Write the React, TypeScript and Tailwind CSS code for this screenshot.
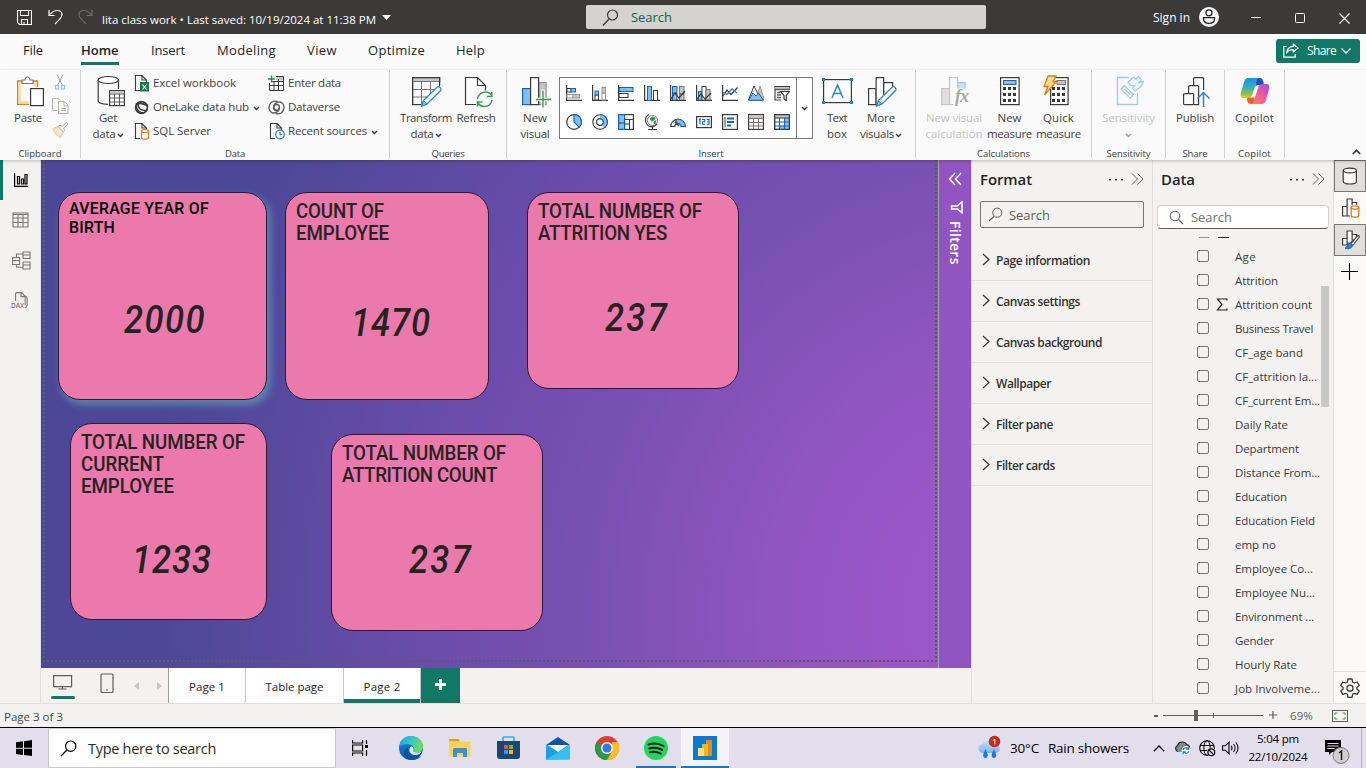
import { useLayoutEffect, useRef } from "react";
import type { ReactNode } from "react";

/* Single line of text whose tracking is tuned so that it fills a given width. */
function T({ w, children, className = "" }: { w: number; children: string; className?: string }) {
  const ref = useRef<HTMLSpanElement>(null);
  useLayoutEffect(() => {
    const el = ref.current;
    if (!el) return;
    el.style.letterSpacing = "0px";
    const natural = parseFloat(getComputedStyle(el).width);
    el.style.letterSpacing = `${(w - natural) / children.length}px`;
  }, [w, children]);
  return (
    <span ref={ref} className={"inline-block whitespace-pre " + className}>
      {children}
    </span>
  );
}

function Svg({ w, h, children, className = "" }: { w: number; h: number; children: ReactNode; className?: string }) {
  return (
    <svg width={w} height={h} viewBox={`0 0 ${w} ${h}`} fill="none" className={"block shrink-0 " + className}>
      {children}
    </svg>
  );
}

const Chevron = ({ c = "#3b3a39" }: { c?: string }) => (
  <Svg w={7} h={5}>
    <path d="M1 1l2.500 2.500L6 1" stroke={c} strokeWidth="1.400" />
  </Svg>
);

/* ---------- title bar ---------- */

function TitleBar() {
  return (
    <div className="flex h-[34px] items-center bg-[#3b3a39] text-white">
      <Svg w={16} h={16} className="ml-4">
        <path d="M1.500 1.500h14v14h-12l-2-2zM4.500 1.500v5h8v-5M5.500 15.500v-5h6v5M8 15.500v-2.500" stroke="#fff" strokeWidth="1.100" />
      </Svg>
      <Svg w={16} h={16} className="ml-4">
        <path d="M1 1v5.500h5.500M1.300 6.200C4 3 6.500 1.500 9.200 1.500c3 0 4.800 2 4.800 4.300 0 2-1 3-2.500 4.500L7 15" stroke="#fff" strokeWidth="1.200" />
      </Svg>
      <Svg w={16} h={16} className="ml-3.5">
        <path d="M14 1v5.500H8.500M13.700 6.200C11 3 8.500 1.500 5.800 1.500 2.800 1.500 1 3.500 1 5.800c0 2 1 3 2.500 4.500L8 15" stroke="#6f6e6d" strokeWidth="1.200" />
      </Svg>
      <T w={274} className="ml-2 mt-[6px] text-[11.500px] font-medium leading-4">{"lita class work • Last saved: 10/19/2024 at 11:38 PM"}</T>
      <Svg w={9} h={5} className="ml-[6px]">
        <path d="M0 0h9L4.500 5z" fill="#fff" />
      </Svg>
      <div className="ml-[195px] flex h-6 w-[400px] items-center rounded-[2px] bg-[#d4d3d1] text-[#185c4c]">
        <Svg w={17} h={17} className="ml-[16px]">
          <path d="M6.800 10.200L1 16.500" stroke="#3b3a39" strokeWidth="1.300" />
          <circle cx="10.500" cy="6" r="5" stroke="#3b3a39" strokeWidth="1.200" />
        </Svg>
        <T w={41} className="ml-[12px] text-[13px] leading-4">Search</T>
      </div>
      <T w={37} className="ml-[167px] mt-[2px] text-[12px] leading-4">Sign in</T>
      <Svg w={20} h={20} className="ml-[9px]">
        <circle cx="10" cy="10" r="10" fill="#fafafa" />
        <circle cx="10" cy="5.800" r="3" stroke="#222" strokeWidth="1.300" />
        <path d="M4.500 10.700h11v1.300c0 2.700-2.500 4.300-5.500 4.300S4.500 14.700 4.500 12z" stroke="#222" strokeWidth="1.300" />
      </Svg>
      <Svg w={10} h={10} className="ml-8">
        <path d="M0 5.500h10" stroke="#fff" />
      </Svg>
      <Svg w={10} h={10} className="ml-[34px] mt-[2px]">
        <rect x=".5" y=".5" width="9" height="9" rx="1" stroke="#fff" />
      </Svg>
      <Svg w={11} h={11} className="ml-[34px] mt-[2px]">
        <path d="M.5.500l10 10M10.500.500l-10 10" stroke="#fff" strokeWidth="1.200" />
      </Svg>
    </div>
  );
}

/* ---------- ribbon ---------- */

function MenuTabs() {
  return (
    <div className="flex h-9 items-center bg-[#fafafa] text-[13px] text-[#252423]">
      <T w={20} className="ml-[23px] mb-[3px]">File</T>
      <div className="ml-[38px] flex h-full w-[38px] flex-col">
        <T w={38} className="mt-[6px] leading-5 font-semibold">Home</T>
        <div className="mt-[2px] h-[3px] bg-[#117865]" />
      </div>
      <T w={34} className="ml-8 mb-[3px]">Insert</T>
      <T w={59} className="ml-8 mb-[3px]">Modeling</T>
      <T w={30} className="ml-[31px] mb-[3px]">View</T>
      <T w={57} className="ml-[31px] mb-[3px]">Optimize</T>
      <T w={29} className="ml-[31px] mb-[3px]">Help</T>
      <div className="ml-auto mr-[6px] mb-[3px] flex h-6 w-[84px] items-center rounded-[3px] bg-[#117865] text-white">
        <Svg w={16} h={15} className="ml-[7px]">
          <path d="M3.500 3.500H.8v10.700h11.400V11" stroke="#fff" strokeWidth="1.200" />
          <path d="M10.200 1l4.800 4-4.800 4V6.700C7 6.700 5 7.500 3.500 10 4 6 6.500 3.600 10.200 3.300z" stroke="#fff" strokeWidth="1.200" strokeLinejoin="round" />
        </Svg>
        <T w={29} className="ml-2 mt-px text-[12px]">Share</T>
        <Svg w={10} h={6} className="ml-[5px]">
          <path d="M.5.500L5 5 9.500.500" stroke="#fff" strokeWidth="1.300" />
        </Svg>
      </div>
    </div>
  );
}

function Group({ className, label, lw, children }: { className: string; label: string; lw: number; children: ReactNode }) {
  return (
    <div className={"flex h-[88px] shrink-0 flex-col border-r border-[#d2d0ce] " + className}>
      <div className="flex h-[77px] shrink-0">{children}</div>
      <div className="flex shrink-0 justify-center text-[9.500px] leading-[13px] text-[#3b3a39]">
        <T w={lw}>{label}</T>
      </div>
    </div>
  );
}

type Line = [string, number];

function Big({ className, icon, a, b, chev, dim }: { className: string; icon: ReactNode; a: Line; b?: Line; chev?: boolean; dim?: boolean }) {
  return (
    <div className={"flex shrink-0 flex-col items-center pt-[5px] text-[11.500px] leading-4 " + (dim ? "text-[#c4c2c0] " : "text-[#3f3e3d] ") + className}>
      <div className="flex h-[35px] items-start justify-center">{icon}</div>
      <T w={a[1]}>{a[0]}</T>
      <div className="flex h-4 items-center gap-px">
        {b && <T w={b[1]}>{b[0]}</T>}
        {chev && <div className="mt-[2px]"><Chevron c={dim ? "#a19f9d" : undefined} /></div>}
      </div>
    </div>
  );
}

function Small({ icon, t, chev, gap = "w-[19px]" }: { icon: ReactNode; t: Line; chev?: boolean; gap?: string }) {
  return (
    <div className="flex h-6 items-center text-[11.500px] leading-4 text-[#3f3e3d]">
      <div className={gap}>{icon}</div>
      <T w={t[1]}>{t[0]}</T>
      {chev && <div className="ml-1 mt-[2px]"><Chevron /></div>}
    </div>
  );
}

const K = "#3b3a39";
const B = "#83beec";
const BS = "#1065b5";
const G = "#c8c6c4";

const PasteIcon = () => (
  <Svg w={28} h={32}>
    <path d="M6 6H1.700v23.300H13" stroke="#e07b12" strokeWidth="1.400" />
    <path d="M3.500 7v20.500H13" stroke="#fbdc94" strokeWidth="2.400" />
    <path d="M16 6h5.500v6" stroke="#e07b12" strokeWidth="1.400" />
    <path d="M19.500 7v5" stroke="#fbdc94" strokeWidth="2.200" />
    <path d="M6 8.500V5h3c.2-1.700 1-3 2.500-3s2.300 1.300 2.500 3h3v3.500z" fill="#fff" stroke="#797775" strokeWidth="1.200" />
    <rect x="14.600" y="13.600" width="12.800" height="17" fill="#fff" stroke={K} strokeWidth="1.200" />
  </Svg>
);
const CutIcon = () => (
  <Svg w={16} h={16}>
    <path d="M5 .5l5.500 11M11 .5L5.500 11.500" stroke="#a19f9d" />
    <rect x="3.500" y="11.500" width="3" height="3.500" stroke="#92c3e3" strokeWidth="1.200" />
    <rect x="9.500" y="11.500" width="3" height="3.500" stroke="#92c3e3" strokeWidth="1.200" />
  </Svg>
);
const CopyIcon = () => (
  <Svg w={17} h={16}>
    <path d="M5 12.500H.5V.5h6l1.500 2" stroke="#b3b0ad" />
    <path d="M6.500 3.500h6l3.500 3.500v8.500H6.500zM12 3.500V7.500h4M9 10.500h5M9 12.500h5" stroke="#b3b0ad" />
  </Svg>
);
const BrushIcon = () => (
  <Svg w={16} h={16}>
    <path d="M1 6.500l5-2 5.500 5.500-3 5.500C5 14 2.500 11 1 6.500z" fill="#fce5c6" stroke="#f0c08e" />
    <path d="M6 4.500l2-1.500 2 1.500L14.500.500 16 2l-4.500 4.200 1.500 2-1.500 1.800z" fill="#fff" stroke="#b3b0ad" />
  </Svg>
);

const GetDataIcon = () => (
  <Svg w={28} h={32}>
    <path d="M1.200 5v21c0 1.500 3 3 9.800 3.300M21.500 5v9" stroke={K} strokeWidth="1.200" />
    <ellipse cx="11.300" cy="5" rx="10.200" ry="3.500" fill="#fff" stroke={K} strokeWidth="1.200" />
    <rect x="12.600" y="15.600" width="14.800" height="15" fill="#fff" stroke={K} strokeWidth="1.200" />
    <path d="M13 16h14v2.500H13z" fill={G} />
    <path d="M12.600 19h15M12.600 23h15M12.600 27h15M17.500 19v11.500M22.500 19v11.500" stroke="#605e5c" />
  </Svg>
);

const FilePage = ({ children }: { children: ReactNode }) => (
  <Svg w={16} h={17}>
    <path d="M6 15.500H1.500V.5H8L12.500 5v2.500M8 .5V5h4.500" stroke={K} strokeWidth="1.100" />
    {children}
  </Svg>
);
const ExcelIcon = () => (
  <FilePage>
    <rect x="6" y="7" width="9" height="9.500" fill="#107c41" />
    <path d="M8.500 9.500l4 5M12.500 9.500l-4 5" stroke="#fff" strokeWidth="1.200" />
  </FilePage>
);
const SqlIcon = () => (
  <FilePage>
    <path d="M7.500 8v7c0 .7 1.500 1.200 3.500 1.200s3.500-.5 3.500-1.200V8" fill="#fff" stroke="#e07b12" strokeWidth="1.200" />
    <ellipse cx="11" cy="8" rx="3.500" ry="1.500" fill="#fff" stroke="#e07b12" strokeWidth="1.200" />
  </FilePage>
);
const RecentIcon = () => (
  <FilePage>
    <circle cx="11" cy="11.500" r="4.300" fill="#fff" stroke="#1683c9" strokeWidth="1.200" />
    <path d="M11 9v2.700h2.300" stroke="#1683c9" strokeWidth="1.200" />
  </FilePage>
);
const LakeIcon = () => (
  <Svg w={15} h={15}>
    <circle cx="7.500" cy="7.500" r="5.900" stroke={K} strokeWidth="1.700" />
    <path d="M4.500 2C3 6.500 5 11 13.500 10.500M1.800 6C3 11 7 13.500 10 13" stroke={K} strokeWidth="1.500" />
    <path d="M2 4.500c3-2.500 6-1 12 1" stroke={K} strokeWidth="2" />
  </Svg>
);
const EnterIcon = () => (
  <Svg w={16} h={17}>
    <path d="M8 2h7.500v3.500H8z" fill={G} />
    <path d="M8 1.500h7.500v14H1.500V8M4 6.500h11.500M1.500 10.500h14M6 7v8.500M10.500 4v11.500" stroke={K} />
    <path d="M3.500.5v7M0 4h7" stroke="#2b8a3e" strokeWidth="1.300" />
  </Svg>
);
const DataverseIcon = () => (
  <Svg w={17} h={15}>
    <path d="M9.500 1.500C5 0 1 3 1 7.500c0 3 2 5.500 4.500 5.500 3.500 0 6-2.500 6-5.500 0-2-1.500-3-3-3S5.800 6 5.800 7.500 7 9.700 8.300 9.300" stroke="#605e5c" strokeWidth="1.400" />
    <path d="M7.500 13.500c4.500 1.500 8.500-1.500 8.500-6C16 4.500 14 2 11.500 2 8 2 5.500 4.500 5.500 7.500c0 2 1.500 3 3 3s2.700-1.500 2.700-3" stroke="#605e5c" strokeWidth="1.400" />
  </Svg>
);

const Pencil = ({ x, y }: { x: number; y: number }) => (
  <g transform={`translate(${x} ${y})`}>
    <path d="M2.500 14.500L16.500.800c2-.6 4 1.600 3.300 3.500L6 18 .8 20z" fill="#fff" stroke="#2a86c8" strokeWidth="1.300" />
    <path d="M2.500 14.500L6 18l-5.200 2z" fill="#83beec" stroke="#2a86c8" />
  </g>
);
const TransformIcon = () => (
  <Svg w={32} h={33} className="ml-[2px]">
    <rect x="1.600" y="2.600" width="27" height="27" stroke={K} strokeWidth="1.200" />
    <path d="M2 3h26v3.500H2z" fill={G} />
    <path d="M1.600 6.500h27M1.600 14.500h27M1.600 22h27M10.500 6.500v23M19.500 6.500v23" stroke="#797775" />
    <path d="M1.600 29.600V2.600h27v5" stroke={K} strokeWidth="1.200" />
    <path d="M8 32L30 10v21z" fill="#fafafa" />
    <Pencil x={10} y={11} />
  </Svg>
);
const RefreshIcon = () => (
  <Svg w={29} h={33} className="ml-1">
    <path d="M12 29.500H1.500v-27h12l8 8v5M13.500 2.500v8h8" stroke={K} strokeWidth="1.200" />
    <path d="M13.500 24c.5-4 4-7 8-7 3 0 5 1.300 6.300 3.500M27.800 17v4.500h-5M28 25c-.5 4-4 6.500-7.500 6.500-3 0-5.200-1.300-6.500-3.500M13.500 31.500V27h5" stroke="#3c9a52" strokeWidth="1.500" />
  </Svg>
);
const NewVisualIcon = () => (
  <Svg w={30} h={33} className="ml-[2px]">
    <rect x="1.600" y="13.600" width="8" height="16" fill={B} stroke={BS} strokeWidth="1.200" />
    <rect x="17.600" y="7.600" width="7.500" height="22" fill={G} stroke="#979593" strokeWidth="1.200" />
    <rect x="9.600" y="2.600" width="8" height="27" fill="#fff" stroke={K} strokeWidth="1.200" />
    <path d="M22 14.500v17M13.500 24.500H30" stroke="#fafafa" strokeWidth="3.500" />
    <path d="M22 15.500v17M15 24.500h15" stroke="#2b9a47" strokeWidth="1.300" />
  </Svg>
);
const TextBoxIcon = () => (
  <Svg w={31} h={28} className="mt-[3px]">
    <rect x="1.600" y="1.600" width="27.800" height="23" fill="#fff" stroke={K} strokeWidth="1.200" />
    <path d="M10 20L15.500 7 21 20M12 15.500h7" stroke="#2a86c8" strokeWidth="1.500" />
    <path d="M0 0h3v3H0zM28 0h3v3h-3zM0 23h3v3H0zM28 23h3v3h-3z" fill="#1683c9" />
  </Svg>
);
const MoreIcon = () => (
  <Svg w={32} h={33} className="ml-[2px]">
    <rect x="2.600" y="13.600" width="7.500" height="16" fill="#fff" stroke={K} strokeWidth="1.200" />
    <rect x="17.600" y="7.600" width="9" height="22" fill="#fff" stroke={K} strokeWidth="1.200" />
    <rect x="10.100" y="2.600" width="7.500" height="27" fill="#fff" stroke={K} strokeWidth="1.200" />
    <path d="M9 32l19-21v20z" fill="#fafafa" />
    <Pencil x={10} y={11} />
  </Svg>
);
const NewCalcIcon = () => (
  <Svg w={36} h={33} className="ml-[4px]">
    <rect x="3.600" y="13.600" width="8" height="16" fill="#e1dfdd" stroke="#c8c6c4" strokeWidth="1.200" />
    <rect x="19.600" y="7.600" width="7.500" height="12" fill="#c9e3f7" stroke="#9dc6e6" strokeWidth="1.200" />
    <rect x="11.600" y="2.600" width="8" height="27" fill="#fafafa" stroke="#c8c6c4" strokeWidth="1.200" />
    <path d="M17 13.500h13V32H15z" fill="#fafafa" />
    <text x="17" y="27" fontSize="18" fontStyle="italic" fontWeight="bold" letterSpacing="-1" fontFamily="Liberation Serif, serif" fill="#a9a7a5">fx</text>
  </Svg>
);
const calcDots = [
  [4, 13], [9, 13], [14, 13], [4, 19], [9, 19], [14, 19], [4, 25], [9, 25], [14, 25],
];
const MeasureIcon = () => (
  <Svg w={20} h={32}>
    <rect x=".6" y="2.600" width="18.500" height="27" fill="#fff" stroke={K} strokeWidth="1.200" />
    <rect x="3.500" y="5.500" width="12.500" height="4" fill={B} stroke={BS} />
    {calcDots.map(([x, y]) => <rect key={x + "-" + y} x={x - 1} y={y - 1} width="3" height="3" fill={K} />)}
  </Svg>
);
const QuickIcon = () => (
  <Svg w={26} h={32} className="mr-[6px]">
    <rect x="7.600" y="2.600" width="17.500" height="27" fill="#fff" stroke={K} strokeWidth="1.200" />
    <rect x="14" y="5.500" width="8.500" height="4" fill={G} stroke="#797775" />
    {calcDots.map(([x, y]) => <rect key={x + "-" + y} x={x + 5} y={y - 1} width="3" height="3" fill={K} />)}
    <path d="M5 1h8l-3 5.500h3.500L1.500 20 5 11.500H1z" fill="#fbd98d" stroke="#e07b12" strokeWidth="1.300" />
  </Svg>
);
const SensIcon = () => (
  <Svg w={28} h={32} className="ml-[2px]">
    <path d="M13 2.500H1.500v27h20V18" stroke="#9fcbe6" strokeWidth="1.300" />
    <path d="M5 14l3.500-3.500 9 9L14 23zM8.500 14l5.500 5.500" stroke="#9fcbe6" strokeWidth="1.200" />
    <path d="M12 7.500L17.500 2l2.500 2.500 2.500-3 3 3-2.500 3 4.500-1-2.500 5-6 4.500-2.500-2.500 2-2.500-3.500-.5z" stroke="#a9cce2" strokeWidth="1.300" fill="#e9f3f9" />
  </Svg>
);
const PublishIcon = () => (
  <Svg w={28} h={33} className="ml-[2px]">
    <path d="M6.600 18V11.600c0-.6.400-1 1-1h8c.6 0 1 .4 1 1V29.600h-5" stroke={K} strokeWidth="1.200" />
    <path d="M11.600 10V3.600c0-.6.400-1 1-1h8c.6 0 1 .4 1 1V15" stroke={K} strokeWidth="1.200" />
    <rect x="1.600" y="18.600" width="10" height="11" rx="1" fill="#fff" stroke={K} strokeWidth="1.200" />
    <path d="M21.500 32V17.500M15.500 23.500l6-6 6 6" stroke="#2a86c8" strokeWidth="1.500" />
  </Svg>
);
const CopilotIcon = () => (
  <Svg w={32} h={32}>
    <defs>
      <linearGradient id="cpa" x1="0" y1="0" x2="0" y2="1">
        <stop offset="0" stopColor="#1b8df0" /><stop offset=".45" stopColor="#2fb2c0" /><stop offset=".75" stopColor="#7fbf4d" /><stop offset="1" stopColor="#f3c520" />
      </linearGradient>
      <linearGradient id="cpb" x1="1" y1="0" x2="0" y2="1">
        <stop offset="0" stopColor="#a04df0" /><stop offset=".5" stopColor="#ef5a9c" /><stop offset="1" stopColor="#fb8b4a" />
      </linearGradient>
    </defs>
    <path d="M16 3h5c2 0 2.600 1.500 3.200 3.500l1 3.500H20c-2 0-3 .5-3.500 2z" fill="#1c50c8" />
    <path d="M9 3h12c-2 0-3 1.500-3.500 3.500L13.500 19c-.7 2.500-2 4-4.500 4H5c-3 0-4-2-3-5.500L5 7c.8-2.700 2-4 4-4z" fill="url(#cpa)" />
    <path d="M15.500 22.500h-5c-2 0-3 .8-2.500 2.500.8 2.800 1.500 4 4 4h4z" fill="#f0622f" />
    <path d="M23 29H11.500c2 0 3-1.500 3.500-3.500l4-12.500c.7-2.500 2-4 4.500-4H27c3 0 4 2 3 5.500L27 25c-.8 2.700-2 4-4 4z" fill="url(#cpb)" />
  </Svg>
);

const axis = <path d="M.6 0v15.400H16" stroke={K} strokeWidth="1.200" />;
const galleryIcons: ReactNode[] = [
  <>{axis}<rect x="1" y="3.500" width="4" height="3.500" fill="#fff" stroke={K} /><rect x="5" y="3.500" width="4.500" height="3.500" fill={B} stroke={BS} /><rect x="1" y="9.500" width="6" height="3.500" fill="#fff" stroke="#979593" /><rect x="7" y="9.500" width="6.500" height="3.500" fill={G} stroke="#979593" /></>,
  <>{axis}<rect x="3" y="10" width="3.500" height="5" fill="#fff" stroke={K} /><rect x="3" y="6" width="3.500" height="4" fill={B} stroke={BS} /><rect x="10" y="8" width="3.500" height="7" fill="#fff" stroke="#979593" /><rect x="10" y="2.500" width="3.500" height="5.500" fill={G} stroke="#979593" /></>,
  <><rect x="1" y="2.500" width="14" height="4" fill={B} stroke={BS} /><rect x="1" y="8.500" width="9" height="4" fill="#fff" stroke={K} />{axis}</>,
  <>{axis}<rect x="3.500" y="1.500" width="4" height="14" fill={B} stroke={BS} /><rect x="9.500" y="5.500" width="4" height="10" fill="#fff" stroke={K} /></>,
  <><rect x="2.500" y="1.500" width="4.500" height="14" fill={B} stroke={BS} /><rect x="9.500" y="1.500" width="4.500" height="14" fill={G} stroke="#797775" /><path d="M.6 0v15.400H16M1 14l4-6 4 5 6-7M3 8h4M10 9h4" stroke={K} strokeWidth="1.200" /></>,
  <><rect x="2.500" y="6.500" width="3.500" height="9" fill={B} stroke={BS} /><rect x="6" y="1.500" width="4" height="14" fill="#fff" stroke={K} /><rect x="10" y="4.500" width="4" height="11" fill={G} stroke="#797775" /><path d="M.6 0v15.400H16M1 14l4-5 4 5 6-6" stroke={K} strokeWidth="1.200" /></>,
  <>{axis}<path d="M1 11l4-6 4 4.500L15.500 2.500" stroke={K} strokeWidth="1.300" /><path d="M1 7.500l4 2 5-5.500 5 4" stroke="#2a86c8" strokeWidth="1.300" /></>,
  <><path d="M12 1l4 13.500H8z" fill={G} stroke="#979593" /><path d="M.5 15L6 1 13 15z" fill="#fff" stroke={K} /><path d="M.5 15.300L5 8l3 3 2.500-3 5 7.300z" fill={B} stroke={BS} /></>,
  <><path d="M7 15H1V1.500h14.500V5" stroke={K} strokeWidth="1.100" /><path d="M1.500 2h14v2.500h-14z" fill={G} /><path d="M1 4.500h14.500M3 7.500h3M3 10h4M3 12.500h4" stroke="#605e5c" strokeWidth="1.300" /><path d="M6.500 6.500h9l-3.200 4v5l-2.300-1.500v-3.500z" fill="#fff" stroke={K} strokeWidth="1.200" /></>,
  <><circle cx="8" cy="8" r="7.300" fill="#fff" stroke={K} strokeWidth="1.200" /><path d="M8 .7a7.300 7.300 0 0 1 5.200 12.500L8 8z" fill={B} stroke={BS} strokeWidth="1.200" /></>,
  <><circle cx="8" cy="8" r="5.300" stroke={K} strokeWidth="5" /><circle cx="8" cy="8" r="5.300" stroke="#fff" strokeWidth="2.700" /><path d="M8 2.700a5.300 5.300 0 0 1 3.500 9.300" stroke={BS} strokeWidth="5" /><path d="M8 2.700a5.300 5.300 0 0 1 3.500 9.300" stroke={B} strokeWidth="2.700" /></>,
  <><rect x=".6" y=".6" width="14.800" height="14.800" fill="#fff" stroke={K} strokeWidth="1.200" /><path d="M.6.600h6v14.800h-6z" fill={B} stroke={BS} strokeWidth="1.200" /><path d="M6.600 5.500h8.800M11.500 5.500v10M6.600 10h5M.6 9h6" stroke={K} strokeWidth="1.100" /></>,
  <><circle cx="8.500" cy="6.500" r="5" fill="#fff" stroke="#797775" /><path d="M5.500 4.500l3-2 3.500 1.500-2 2.500-2.500 1zM10 7l2.500-1-1 4-2 .5z" fill="#2b9a47" /><path d="M5 .5C.5 2.500.5 9 4 11.500s7.500 1 9-1.500M8.500 12.500v2.500M4 15.500h9" stroke={K} strokeWidth="1.200" /></>,
  <><path d="M.8 12.500a7.200 7.200 0 0 1 14.400 0h-4a3.200 3.200 0 0 0-6.400 0z" fill="#fff" stroke={K} strokeWidth="1.200" /><path d="M6 5.600a7 7 0 0 1 9.200 6.900h-4a3.200 3.200 0 0 0-3.700-3z" fill={B} stroke={BS} /><path d="M5 7.500l4 4.500" stroke={K} strokeWidth="1.500" /></>,
  <><rect x=".6" y="2.600" width="14.800" height="11" fill="#fff" stroke={K} strokeWidth="1.200" /><path d="M2.800 6l1.200-1v5.500M6.200 5.500h2.500v2.300H6.500v2.400H9M10.700 5.500H13v4.700h-2.300M11 7.800h2" stroke={BS} strokeWidth="1.100" /></>,
  <><rect x=".6" y=".6" width="14.800" height="14.800" fill="#fff" stroke={K} strokeWidth="1.200" /><path d="M3 3v10.500" stroke={K} /><path d="M5 4.500h7M5 8h7M5 11.500h4" stroke={BS} strokeWidth="2" /></>,
  <><rect x=".6" y=".6" width="14.800" height="14.800" fill="#fff" stroke={K} strokeWidth="1.200" /><path d="M1 1h14v3H1z" fill={G} /><path d="M.6 4.500h14.800M.6 8.500h14.800M.6 12h14.800M5.500 4v11M10.500 4v11" stroke="#797775" /></>,
  <><rect x=".6" y=".6" width="14.800" height="14.800" fill="#fff" stroke={K} strokeWidth="1.200" /><path d="M1 1h14v3H1z" fill={G} /><path d="M10.500 4H15v11H5.500v-3.500h5z" fill={B} /><path d="M.6 8h14.800M.6 12h14.800M5.500 4v11M10.500 4v11" stroke={BS} /><path d="M.6.600h14.800v14.800H.6zM.6 4h14.800" stroke={K} strokeWidth="1.200" /></>,
];

function Ribbon() {
  return (
    <div className="relative z-10 flex h-[90px] bg-[#fafafa] shadow-[0_1px_3px_rgba(0,0,0,0.25)]">
      <Group className="w-[81px]" label="Clipboard" lw={43}>
        <Big className="ml-[6px] mr-[2px] w-11" icon={<div className="ml-[3px]"><PasteIcon /></div>} a={["Paste", 28]} />
        <div className="mt-1 flex flex-col gap-2">
          <CutIcon /><CopyIcon /><BrushIcon />
        </div>
      </Group>
      <Group className="w-[309px]" label="Data" lw={20}>
        <Big className="ml-[3px] mr-[2px] w-12" icon={<div className="ml-[5px]"><GetDataIcon /></div>} a={["Get", 18]} b={["data", 23]} chev />
        <div className="mt-px w-[134px]">
          <Small icon={<ExcelIcon />} t={["Excel workbook", 83]} />
          <Small icon={<LakeIcon />} t={["OneLake data hub", 96]} chev />
          <Small icon={<SqlIcon />} t={["SQL Server", 58]} />
        </div>
        <div className="mt-px">
          <Small gap="w-5" icon={<EnterIcon />} t={["Enter data", 53]} />
          <Small gap="w-5" icon={<DataverseIcon />} t={["Dataverse", 52]} />
          <Small gap="w-5" icon={<div className="ml-px"><RecentIcon /></div>} t={["Recent sources", 79]} chev />
        </div>
      </Group>
      <Group className="w-[117px]" label="Queries" lw={33}>
        <Big className="ml-[10px] w-[52px]" icon={<TransformIcon />} a={["Transform", 52]} b={["data", 23]} chev />
        <Big className="w-12" icon={<RefreshIcon />} a={["Refresh", 39]} />
      </Group>
      <Group className="w-[409px]" label="Insert" lw={25}>
        <Big className="ml-1 w-12" icon={<NewVisualIcon />} a={["New", 24]} b={["visual", 29]} />
        <div className="mt-[7px] flex h-[62px] w-[254px] border border-[#797775] bg-white">
          <div className="grid w-[237px] grid-cols-[repeat(9,26px)] grid-rows-[29px_29px] border-r border-[#797775] pl-px">
            {galleryIcons.map((ic, i) => (
              <div key={i} className="flex items-center justify-center">
                <Svg w={16} h={16}>{ic}</Svg>
              </div>
            ))}
          </div>
          <div className="flex flex-1 items-center justify-center"><Chevron /></div>
        </div>
        <Big className="ml-[2px] w-11" icon={<TextBoxIcon />} a={["Text", 20]} b={["box", 20]} />
        <Big className="w-11" icon={<MoreIcon />} a={["More", 28]} b={["visuals", 34]} chev />
      </Group>
      <Group className="w-[176px]" label="Calculations" lw={53}>
        <Big className="ml-[8px] mr-px w-[60px]" icon={<NewCalcIcon />} a={["New visual", 56]} b={["calculation", 57]} dim />
        <Big className="w-[49px]" icon={<MeasureIcon />} a={["New", 24]} b={["measure", 45]} />
        <Big className="w-[49px]" icon={<QuickIcon />} a={["Quick", 31]} b={["measure", 45]} />
      </Group>
      <Group className="w-[74px]" label="Sensitivity" lw={44}>
        <Big className="w-[73px]" icon={<SensIcon />} a={["Sensitivity", 53]} chev dim />
      </Group>
      <Group className="w-[59px]" label="Share" lw={25}>
        <Big className="w-[58px]" icon={<PublishIcon />} a={["Publish", 38]} />
      </Group>
      <Group className="w-[60px]" label="Copilot" lw={33}>
        <Big className="w-[59px]" icon={<CopilotIcon />} a={["Copilot", 39]} />
      </Group>
      <Svg w={9} h={6} className="ml-auto mr-[5px] mt-[79px]">
        <path d="M.8 5l3.700-3.700L8.200 5" stroke={K} strokeWidth="1.700" />
      </Svg>
    </div>
  );
}

/* ---------- left rail ---------- */

function LeftRail() {
  return (
    <div className="flex w-[41px] shrink-0 flex-col items-start border-r border-[#e1dfdd] bg-[#f3f2f1]">
      <div className="flex h-10 w-full items-center border-l-[3px] border-[#117865]">
        <Svg w={16} h={16} className="ml-[10px]">
          <path d="M1.600 1v13.400H15M4.500 4.500h2v7.500h-2zM8.500 7h2v5h-2zM12 2.500h2V12h-2z" stroke="#000" strokeWidth="1.200" />
        </Svg>
      </div>
      <Svg w={17} h={16} className="ml-[12px] mt-[12px]">
        <path d="M1 1h15v14H1zM1 2.500h15M1 6h15M1 10.500h15M6 2.500v12.500M11 2.500v12.500" stroke="#797775" strokeWidth="1.100" />
      </Svg>
      <Svg w={19} h={19} className="ml-[12px] mt-[23px]">
        <path d="M.6 6.500h7v7h-7zM.6 9.500h7M11 1h7v6.500h-7zM11 4h7M11 11h7v7h-7zM11 14h7M4.500 6.500V3H11M4.500 13.500v2.700H11" stroke="#797775" strokeWidth="1.100" />
      </Svg>
      <div className="ml-[11px] mt-[22px] h-5 w-5">
        <Svg w={20} h={19}>
          <path d="M4.600 9V2c0-.8.500-1.400 1.400-1.400h4.500l3.700 3.700v9M10 .6v4h4.200M14.500 4c1 .6 1.700 1.500 1.700 3v5c0 3-1 3.500-2.500 3.500" stroke="#797775" strokeWidth="1.100" />
          <text x="0" y="16" fontSize="6.500" fontFamily="Open Sans, sans-serif" fontWeight="600" fill="#797775">DAX</text>
        </Svg>
      </div>
    </div>
  );
}

/* ---------- report canvas ---------- */

type Card = { box: string; lines: [string, number][]; value: string; vw: number; valueCls: string; small?: boolean };

const cards: Card[] = [
  { box: "left-[17px] top-8 w-[209px] h-[208px] shadow-[3px_4px_7px_1px_rgba(96,170,190,0.6)]", lines: [["AVERAGE YEAR OF", 140], ["BIRTH", 46]], value: "2000", vw: 82, valueCls: "left-[65px] top-[105px]", small: true },
  { box: "left-[244px] top-8 w-[204px] h-[208px]", lines: [["COUNT OF", 88], ["EMPLOYEE", 93]], value: "1470", vw: 80, valueCls: "left-[65px] top-[108px]" },
  { box: "left-[486px] top-8 w-[212px] h-[197px]", lines: [["TOTAL NUMBER OF", 164], ["ATTRITION YES", 129]], value: "237", vw: 64, valueCls: "left-[77px] top-[103px]" },
  { box: "left-[29px] top-[263px] w-[197px] h-[197px]", lines: [["TOTAL NUMBER OF", 164], ["CURRENT", 83], ["EMPLOYEE", 93]], value: "1233", vw: 80, valueCls: "left-[61px] top-[114px]" },
  { box: "left-[290px] top-[274px] w-[212px] h-[197px]", lines: [["TOTAL NUMBER OF", 164], ["ATTRITION COUNT", 155]], value: "237", vw: 64, valueCls: "left-[77px] top-[103px]" },
];

const NARROW = 0.91;

function Canvas() {
  return (
    <div className="relative h-[508px] w-[930px] overflow-hidden bg-[radial-gradient(circle_at_1000px_450px,#9c56ca_0px,#9b56c9_130px,#9055c1_270px,#7850b2_463px,#6a4cab_620px,#594a9f_770px,#4c4796_900px,#4c4899_1100px)]">
      <div className="absolute -top-2 left-[2px] h-[510px] w-[894px] border-2 border-dotted border-[#5c5c5e]" />
      <div className="absolute left-[897px] top-0 h-full w-px bg-[#a8a3a8]" />
      {cards.map((c, i) => (
        <div key={i} className={"absolute rounded-[22px] border border-[#2c1b30] bg-[#eb79ac] font-[Roboto,sans-serif] " + c.box}>
          <div className={"flex flex-col " + (c.small ? "pl-[9.500px] pt-[6px] text-[16.500px] leading-[19px] font-medium text-black" : "pl-[9.500px] pt-[8px] text-[19.500px] leading-[22px] font-medium text-[#252423]")}>
            {c.lines.map(([t, w]) => <div key={t} className="flex"><T w={w / 0.96} className="origin-left scale-x-[0.96]">{t}</T></div>)}
          </div>
          <div className={"absolute text-[38px] italic leading-[44px] text-[#252423] " + c.valueCls}>
            <T w={c.vw / NARROW} className="origin-left scale-x-[0.91] font-medium">{c.value}</T>
          </div>
        </div>
      ))}
      <div className="absolute left-[898px] top-0 flex h-full w-8 flex-col items-center bg-[#9155c2]">
        <Svg w={14} h={14} className="mt-3">
          <path d="M7 1L1.500 7 7 13M13 1L7.500 7l5.500 6" stroke="#fff" strokeWidth="1.400" />
        </Svg>
        <Svg w={13} h={13} className="mt-[15px] ml-[3px]">
          <path d="M12 .8v11L7.500 8H1.500V5h6z" stroke="#fff" strokeWidth="1.500" />
        </Svg>
        <div className="mt-[7px] text-[14px] font-semibold leading-4 tracking-[0.3px] text-white [writing-mode:vertical-rl]">Filters</div>
      </div>
    </div>
  );
}

function PageTabs() {
  return (
    <div className="flex h-[35px] bg-[#f3f2f1] text-[11.500px] leading-4 text-[#252423]">
      <div className="ml-[10px] w-6 pt-[7px]">
        <Svg w={20} h={15} className="ml-[2px]">
          <path d="M.6.600h18v11h-18zM9.500 12v2M5.500 14h8" stroke="#605e5c" strokeWidth="1.200" />
        </Svg>
        <div className="mt-[6px] h-[3px] rounded-full bg-[#117865]" />
      </div>
      <Svg w={14} h={21} className="ml-[25px] mt-[5px]">
        <rect x="1" y="1" width="12" height="18.500" rx="1" stroke="#605e5c" strokeWidth="1.200" /><path d="M6 17h2" stroke="#605e5c" strokeWidth="1.200" />
      </Svg>
      <Svg w={5} h={8} className="ml-5 mt-[14px]"><path d="M5 0v8L0 4z" fill="#c8c6c4" /></Svg>
      <Svg w={5} h={8} className="ml-[18px] mt-[14px]"><path d="M0 0v8l5-4z" fill="#c8c6c4" /></Svg>
      <div className="ml-[6px] flex w-[77px] justify-center border-l border-[#a19f9d] bg-white pt-[11px]"><T w={36}>Page 1</T></div>
      <div className="flex w-[98px] justify-center border-l border-[#c8c6c4] bg-white pt-[11px]"><T w={58}>Table page</T></div>
      <div className="flex w-[78px] flex-col items-center border-x border-[#c8c6c4] bg-white pt-[11px] font-medium">
        <T w={37}>Page 2</T>
        <div className="mt-1 h-1 w-full bg-[#117865]" />
      </div>
      <div className="flex w-[39px] items-center justify-center bg-[#117865]">
        <Svg w={11} h={11} className="mb-[3px]"><path d="M5.500 0v11M0 5.500h11" stroke="#fff" strokeWidth="3" /></Svg>
      </div>
    </div>
  );
}

/* ---------- side panes ---------- */

function PaneHead({ title, w }: { title: string; w: number }) {
  return (
    <div className="flex h-[38px] items-center pl-2 text-[15px] font-semibold text-[#252423]">
      <T w={w} className="leading-5">{title}</T>
      <Svg w={16} h={3} className="ml-auto">
        <path d="M1 1h2v1.500H1zM7 1h2v1.500H7zM13 1h2v1.500h-2z" fill="#3b3a39" />
      </Svg>
      <Svg w={13} h={12} className="ml-[7px] mr-2">
        <path d="M1 .5L6.500 6 1 11.500M6.500.500L12 6l-5.500 5.500" stroke="#605e5c" />
      </Svg>
    </div>
  );
}

const sections: Line[] = [
  ["Page information", 94], ["Canvas settings", 84], ["Canvas background", 106], ["Wallpaper", 55], ["Filter pane", 57], ["Filter cards", 59],
];

function FormatPane() {
  return (
    <div className="flex w-[181px] shrink-0 flex-col border-l border-[#e1dfdd] bg-[#f3f2f1]">
      <PaneHead title="Format" w={52} />
      <div className="ml-2 mt-[3px] flex h-[27px] w-[164px] items-center rounded-[2px] border border-[#797775] text-[13px] text-[#605e5c]">
        <Svg w={15} h={15} className="ml-[7px]">
          <path d="M6 9.500L1 14" stroke="#605e5c" strokeWidth="1.200" /><circle cx="9.300" cy="5.700" r="4.600" stroke="#605e5c" />
        </Svg>
        <T w={41} className="ml-[6px] mt-[2px]">Search</T>
      </div>
      <div className="mt-3 text-[12px] font-semibold text-[#323130]">
        {sections.map(([t, w]) => (
          <div key={t} className="flex h-[41px] items-center border-b border-[#e1dfdd] pl-[10px]">
            <Svg w={9} h={13} className="mb-px"><path d="M1 1l6 5.500-6 5.500" stroke="#3b3a39" strokeWidth="1.300" /></Svg>
            <T w={w} className="ml-[5px] mt-[2px]">{t}</T>
          </div>
        ))}
      </div>
    </div>
  );
}

const fields: Line[] = [
  ["Age", 21], ["Attrition", 43], ["Attrition count", 77], ["Business Travel", 78], ["CF_age band", 68], ["CF_attrition la...", 82],
  ["CF_current Em...", 85], ["Daily Rate", 53], ["Department", 64], ["Distance From...", 85], ["Education", 52], ["Education Field", 80],
  ["emp no", 41], ["Employee Co...", 78], ["Employee Nu...", 80], ["Environment ...", 79], ["Gender", 39], ["Hourly Rate", 62], ["Job Involveme...", 85],
];

function DataPane() {
  return (
    <div className="flex w-[182px] shrink-0 flex-col border-x border-[#e1dfdd] bg-[#f3f2f1]">
      <PaneHead title="Data" w={34} />
      <div className="ml-1 mt-[7px] flex h-6 w-[172px] items-center rounded-[4px] border border-b-[#605e5c] border-[#d1d1d1] bg-white text-[13px] text-[#707070]">
        <Svg w={15} h={15} className="ml-[11px]">
          <path d="M9.500 9.500L14 14" stroke="#605e5c" strokeWidth="1.200" /><circle cx="6" cy="6" r="4.800" stroke="#605e5c" />
        </Svg>
        <T w={41} className="ml-[7px] mt-px">Search</T>
      </div>
      <div className="relative mt-[7px] h-[467px] overflow-hidden text-[11.500px] leading-4 text-[#3b3a39]">
        <div className="-mt-px flex h-[9px] pt-[2px]">
          <div className="ml-[46px] h-px w-[10px] bg-[#979593]" />
          <div className="ml-[9px] h-px w-[11px] bg-[#252423]" />
        </div>
        {fields.map(([t, w]) => (
          <div key={t} className="flex h-6 items-center">
            <div className="mb-px ml-[44px] h-3 w-3 rounded-[2px] border border-[#797775]" />
            <div className="ml-[7px] w-[19px]">
              {t === "Attrition count" && (
                <Svg w={12} h={13}><path d="M11 2.500V1H1.500L6 6.500l-4.500 5.500H11v-1.500" stroke="#252423" strokeWidth="1.200" /></Svg>
              )}
            </div>
            <T w={w} className="mt-px">{t}</T>
          </div>
        ))}
        <div className="absolute right-1 top-[50px] h-[121px] w-2 bg-[#c8c8c8]" />
      </div>
    </div>
  );
}

function RightRail() {
  return (
    <div className="flex w-8 shrink-0 flex-col items-center bg-[#faf9f8]">
      <div className="flex h-8 w-8 items-center justify-center border border-[#797775] bg-[#e1dfdd]">
        <Svg w={16} h={18}>
          <path d="M1.200 3.500v11c0 1.500 2.800 2.500 6.600 2.500s6.600-1 6.600-2.500v-11" fill="#fff" stroke={K} strokeWidth="1.200" />
          <ellipse cx="7.800" cy="3.500" rx="6.600" ry="2.400" fill="#fff" stroke={K} strokeWidth="1.200" />
        </Svg>
      </div>
      <div className="flex h-8 w-8 items-center justify-center">
        <Svg w={20} h={20}>
          <path d="M2.600 8.500h4.500V18H2.600zM7.100 1h5v17h-5zM12.100 4.500h4.500V18h-4.500z" fill="#fff" stroke={K} strokeWidth="1.200" />
          <path d="M10 7h10v13H10z" fill="#faf9f8" />
          <path d="M11.200 9.500v8c0 .9 1.600 1.600 3.800 1.600s3.800-.7 3.800-1.600v-8" fill="#fff" stroke="#e07b12" strokeWidth="1.300" />
          <ellipse cx="15" cy="9.500" rx="3.800" ry="1.600" fill="#fff" stroke="#e07b12" strokeWidth="1.300" />
        </Svg>
      </div>
      <div className="flex h-8 w-8 items-center justify-center border border-[#797775] bg-[#e1dfdd]">
        <Svg w={20} h={20}>
          <path d="M2.600 8.500h4.500V15H2.600zM7.100 1h5v12h-5zM12.100 4.500h4.500V10h-4.500z" fill="#fff" stroke={K} strokeWidth="1.200" />
          <path d="M17.500 6c1-.8 2.300.3 1.500 1.500l-6.300 8-2-1.700z" fill="#fff" stroke={K} strokeWidth="1.100" />
          <path d="M10 13.300l2.500 2c0 2.500-3.500 4.200-7.500 3 2-.8 2.200-4.500 5-5z" fill="#2a86c8" stroke="#1065b5" />
        </Svg>
      </div>
      <Svg w={17} h={17} className="mt-[7px] mr-px"><path d="M8.500 0v17M0 8.500h17" stroke="#000" strokeWidth="1.100" /></Svg>
      <div className="mt-auto flex h-8 w-8 items-center justify-center border-t border-[#e1dfdd]">
        <Svg w={20} h={20}>
          <path d="M8 1h4l.6 3 1.700 1 2.900-1 2 3.400-2.300 2v1.500l2.300 2-2 3.400-2.900-1-1.700 1-.6 3H8l-.6-3-1.700-1-2.900 1-2-3.400 2.300-2V9.400l-2.300-2L2.800 4l2.900 1 1.700-1z" stroke={K} strokeWidth="1.300" strokeLinejoin="round" />
          <circle cx="10" cy="10.200" r="3" stroke={K} strokeWidth="1.300" />
        </Svg>
      </div>
    </div>
  );
}

/* ---------- status bar ---------- */

function StatusBar() {
  return (
    <div className="flex h-6 items-center border-t border-[#e1dfdd] bg-[#f3f2f1] text-[11.500px] text-[#605e5c]">
      <T w={59} className="ml-1 mt-[2px] text-[#4a4846]">Page 3 of 3</T>
      <div className="ml-auto h-[2px] w-[4px] bg-[#605e5c]" />
      <Svg w={100} h={12} className="ml-[5px]">
        <path d="M0 5.500h100M50.500 3v5" stroke="#605e5c" />
        <path d="M31 0h4v11h-4z" fill="#605e5c" />
      </Svg>
      <Svg w={8} h={8} className="ml-[6px] mb-px"><path d="M4 0v8M0 4h8" stroke="#605e5c" strokeWidth="1.200" /></Svg>
      <T w={23} className="ml-[13px]">69%</T>
      <Svg w={16} h={12} className="ml-[19px] mr-[18px]">
        <rect x=".5" y=".5" width="15" height="11" stroke="#605e5c" />
        <path d="M3 5V3h2.500M10.500 3H13v2M13 7v2h-2.500M5.500 9H3V7" stroke="#3c9a52" />
      </Svg>
    </div>
  );
}

/* ---------- taskbar ---------- */

const EdgeIcon = () => (
  <Svg w={24} h={24}>
    <defs>
      <linearGradient id="eg" x1="0" y1="0" x2="1" y2=".3"><stop offset="0" stopColor="#1d9fe6" /><stop offset=".5" stopColor="#30c5d2" /><stop offset="1" stopColor="#6edc5a" /></linearGradient>
      <linearGradient id="eb" x1="0" y1="0" x2=".4" y2="1"><stop offset="0" stopColor="#1689d8" /><stop offset="1" stopColor="#0c59a4" /></linearGradient>
    </defs>
    <circle cx="12" cy="12" r="12" fill="url(#eb)" />
    <path d="M.2 11C1 4.500 6 0 12 0c7 0 12 5 12 10.500 0 4-3 6-6.500 6-3 0-4-1.300-3.500-2.200 1-1 1-5-3.500-5.800C6 7.800 1.500 8.500.2 11z" fill="url(#eg)" />
    <path d="M9 12c-1 5 3 9.500 8 9.500 2.500 0 4.500-1 5.500-2C20 23 16 24 13 24c-5 0-8-4-8-7.500 0-2 1.500-4.500 4-4.500z" fill="#124f96" />
    <path d="M12.500 10.500c2 .5 2.300 2.300 1.500 4-.5.900.5 2 3.500 2 2 0 3.500-.5 5.300-1.500-1 2.500-3.300 4-6.300 4-4 0-6.500-2.500-6-6 .2-1.200 1-2.300 2-2.500z" fill="#e3e6f2" />
  </Svg>
);
const ExplorerIcon = () => (
  <Svg w={22} h={20}>
    <path d="M.5 1h9l1.500 2.500H0V1.500z" fill="#e3a008" />
    <path d="M0 3.500h20.500c.6 0 1 .4 1 1V18.500H0z" fill="#fbd25c" />
    <path d="M4 11.500c0-.8.500-1.500 1.500-1.500h11c1 0 1.500.7 1.500 1.500V19h-4v-4H8v4H4z" fill="#3b8fd8" />
  </Svg>
);
const StoreIcon = () => (
  <Svg w={23} h={24}>
    <path d="M6 6.500V2.700C6 2.300 6.400 2 6.800 2h9.400c.4 0 .8.300.8.700v3.800" stroke="#28b5f0" strokeWidth="1.700" />
    <path d="M0 6h23v15c0 1.700-1 3-2.700 3H2.700C1 24 0 22.700 0 21z" fill="#1a4576" />
    <path d="M7 10h4v4H7z" fill="#f0532c" /><path d="M12 10h4v4h-4z" fill="#7db900" /><path d="M7 15h4v4H7z" fill="#22a5ec" /><path d="M12 15h4v4h-4z" fill="#fdb900" />
  </Svg>
);
const MailIcon = () => (
  <Svg w={24} h={23}>
    <path d="M12 0l12 8H0z" fill="#0f57a5" /><path d="M0 8h24v14.500H0z" fill="#2fb7ef" /><path d="M2 8h20L12 15z" fill="#fff" />
    <path d="M0 8l12 7v7.500H0z" fill="#1e9ce6" /><path d="M24 8L0 22.500h24z" fill="#35bff3" />
  </Svg>
);
const ChromeIcon = () => (
  <Svg w={24} h={24}>
    <circle cx="12" cy="12" r="12" fill="#e33b2e" />
    <path d="M1.600 6A12 12 0 0 0 12 24l5.200-9L12 12z" fill="#2a9a48" />
    <path d="M22.400 6A12 12 0 0 1 12 24l5.200-9V6z" fill="#fbc116" />
    <circle cx="12" cy="12" r="6" fill="#fff" /><circle cx="12" cy="12" r="4.600" fill="#3578e5" />
  </Svg>
);
const SpotifyIcon = () => (
  <Svg w={24} h={24}>
    <circle cx="12" cy="12" r="12" fill="#1fd660" />
    <path d="M4.500 8.500c5-1.500 10.500-1 15 1.500M5.300 12.500c4.500-1.200 9-.7 13 1.500M6 16.300c3.700-1 7.500-.5 10.700 1.300" stroke="#101c14" strokeWidth="2" strokeLinecap="round" />
  </Svg>
);
const PowerBIIcon = () => (
  <Svg w={24} h={24}>
    <path d="M0 0h24v24H0z" fill="#0b78d4" />
    <path d="M13 4h6v16h-6z" fill="#d9920d" /><path d="M9 8h6v12H9z" fill="#eeb62a" /><path d="M5 12h6v8H5z" fill="#fbdf7a" />
  </Svg>
);

function Taskbar() {
  return (
    <div className="flex h-[41px] items-center border-t border-black bg-[#e3deec] text-black">
      <Svg w={16} h={16} className="ml-4">
        <path d="M0 2.300L7 1.300v6.400H0zM8 1.200L16 0v7.700H8zM0 8.700h7v6.200L0 14zM8 8.700h8V16l-8-1.100z" fill="#000" />
      </Svg>
      <div className="ml-4 flex h-10 w-[288px] items-center border border-[#c9c6ce] bg-white">
        <Svg w={17} h={17} className="ml-[11px]">
          <path d="M6.700 10.300L1 16" stroke="#000" strokeWidth="1.300" /><circle cx="10.700" cy="6.200" r="5.200" stroke="#000" strokeWidth="1.200" />
        </Svg>
        <T w={128} className="ml-[11px] mt-[2px] text-[14.500px] text-[#2b2b2b]">Type here to search</T>
      </div>
      <Svg w={17} h={16} className="ml-4">
        <path d="M.6 0v3h10V0M.6 16v-3h10v3M.6 5h10v6H.6zM14.500 0v4M14.500 10v6" stroke="#000" strokeWidth="1.200" /><path d="M13 5h3v3h-3z" fill="#000" />
      </Svg>
      <div className="ml-[30px]"><EdgeIcon /></div>
      <div className="ml-[26px]"><ExplorerIcon /></div>
      <div className="ml-[26px] mb-[3px]"><StoreIcon /></div>
      <div className="ml-[26px]"><MailIcon /></div>
      <div className="ml-[25px]"><ChromeIcon /></div>
      <div className="ml-[17px] flex h-full w-10 flex-col items-center border-b-2 border-[#0f78cf] pt-2"><SpotifyIcon /></div>
      <div className="ml-[5px] flex h-full w-12 flex-col items-center border-b-2 border-[#0f78cf] bg-[#f5f3f9] pt-2"><PowerBIIcon /></div>
      <Svg w={24} h={26} className="ml-[249px]">
        <defs><linearGradient id="cl" x1="0" y1="0" x2="0" y2="1"><stop offset="0" stopColor="#c3dcf6" /><stop offset="1" stopColor="#82b2e8" /></linearGradient></defs>
        <path d="M5 18a4.500 4.500 0 0 1 0-9c1-4 8-4.500 10 0 5-1 7.500 3 6.500 6-.5 2-2 3-4 3z" fill="url(#cl)" />
        <path d="M7.500 14l2 5c.8 2-.3 4-2 4s-3-2-2.200-4zM16 14l2 5c.8 2-.3 4-2 4s-3-2-2.200-4z" fill="#1b78dc" />
        <circle cx="16.500" cy="6.500" r="5.800" fill="#c42b1c" /><path d="M15 5.500L16.800 4v5.500" stroke="#fff" />
      </Svg>
      <T w={29} className="ml-[8px] text-[13.500px]">30°C</T>
      <T w={81} className="ml-[9px] text-[13.500px]">Rain showers</T>
      <Svg w={12} h={7} className="ml-6"><path d="M.8 6.200L6 1l5.200 5.200" stroke="#000" strokeWidth="1.300" /></Svg>
      <Svg w={17} h={14} className="ml-[9px]">
        <path d="M4 10.500A3.200 3.200 0 0 1 3.500 4.500C5 0 11 0 12.500 3.500c2 .3 3 1.500 3 3.500" fill="#8a8a8a" stroke="#222" strokeWidth="1.200" /><path d="M4 10.500L10 4l4 3-6 4z" fill="#777" />
        <circle cx="12" cy="9.500" r="4.500" fill="#fff" /><path d="M9 9c.5-2.500 4-3 5.500-1M15 10c-.5 2.500-4 3-5.500 1M14.700 5.700v2.500h-2.500M9.200 13.300v-2.500h2.500" stroke="#0f78cf" strokeWidth="1.200" />
      </Svg>
      <Svg w={17} h={17} className="ml-2">
        <circle cx="8" cy="8" r="7.300" stroke="#000" strokeWidth="1.100" /><ellipse cx="8" cy="8" rx="3.200" ry="7.300" stroke="#000" /><path d="M1 5.500h14M1 10.500h9" stroke="#000" />
        <circle cx="12.300" cy="12.300" r="4.600" fill="#e3deec" /><circle cx="12.300" cy="12.300" r="3.400" stroke="#000" strokeWidth="1.200" /><path d="M10 10l4.600 4.600" stroke="#000" strokeWidth="1.200" />
      </Svg>
      <Svg w={17} h={14} className="ml-[6px]">
        <path d="M.6 4.800h2.800L7 1.200v11.600L3.400 9.200H.6zM9.200 4.800c1 1.300 1 3.100 0 4.400M11.500 3c2 2.300 2 5.700 0 8M13.800 1.300c3 3.300 3 8.100 0 11.400" stroke="#000" strokeWidth="1.100" />
      </Svg>
      <div className="ml-[9px] flex w-[60px] flex-col items-center text-[11.500px] leading-[18px]">
        <T w={42}>5:04 pm</T>
        <T w={59}>22/10/2024</T>
      </div>
      <Svg w={25} h={25} className="ml-[17px] mt-[8px]">
        <path d="M0 0h16v12H7l-3 3v-3H0z" fill="#000" /><path d="M2.500 3.500h11M2.500 6h11M2.500 8.500h7" stroke="#e3deec" />
        <circle cx="16" cy="15.500" r="8" fill="#cfcdd2" stroke="#777" /><path d="M14 13l2.500-2v9" stroke="#111" strokeWidth="1.400" />
      </Svg>
      <div className="ml-auto mr-1 h-full w-px bg-[#b5b0bd]" />
    </div>
  );
}

export default function App() {
  return (
    <div className="flex h-[768px] w-[1366px] flex-col overflow-hidden bg-[#f3f2f1] font-['Open_Sans','Noto_Sans',sans-serif]">
      <TitleBar />
      <MenuTabs />
      <Ribbon />
      <div className="flex h-[543px]">
        <LeftRail />
        <div className="flex w-[930px] shrink-0 flex-col">
          <Canvas />
          <PageTabs />
        </div>
        <FormatPane />
        <DataPane />
        <RightRail />
      </div>
      <StatusBar />
      <Taskbar />
    </div>
  );
}
